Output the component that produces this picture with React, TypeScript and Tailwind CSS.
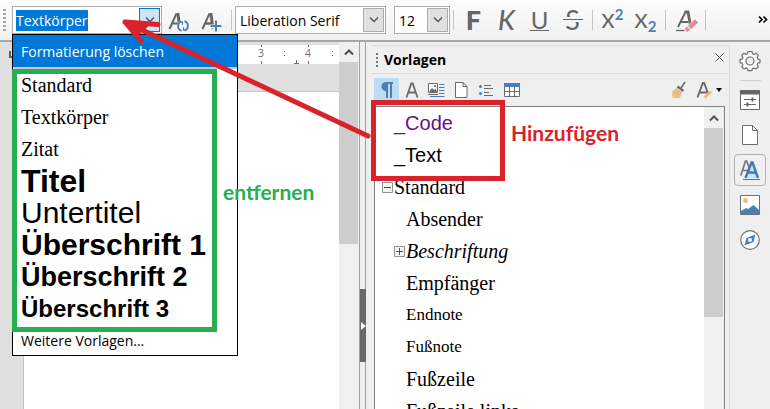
import { useEffect, useRef, type ReactNode } from "react";

type StyleItem = {
  name: string;
  className: string;
};

type TreeItem = StyleItem & {
  level: number;
  toggle?: "plus" | "minus";
};

const dropdownStyles: StyleItem[] = [
  { name: "Standard", className: "font-['Liberation_Serif',serif] text-[20px]" },
  { name: "Textkörper", className: "font-['Liberation_Serif',serif] text-[20px]" },
  { name: "Zitat", className: "font-['Liberation_Serif',serif] text-[20px]" },
  { name: "Titel", className: "font-bold text-[32px]" },
  { name: "Untertitel", className: "text-[30px]" },
  { name: "Überschrift 1", className: "font-bold text-[30px]" },
  { name: "Überschrift 2", className: "font-bold text-[27px]" },
  { name: "Überschrift 3", className: "font-bold text-[24px]" },
];

const treeStyles: TreeItem[] = [
  { name: "_Code", level: 0, className: "font-['Liberation_Sans',sans-serif] text-[20px] text-[#6d0f7d]" },
  { name: "_Text", level: 0, className: "font-['Liberation_Sans',sans-serif] text-[20px]" },
  { name: "Standard", level: 0, toggle: "minus", className: "text-[20px]" },
  { name: "Absender", level: 1, className: "text-[20px]" },
  { name: "Beschriftung", level: 1, toggle: "plus", className: "italic text-[20px]" },
  { name: "Empfänger", level: 1, className: "text-[20px]" },
  { name: "Endnote", level: 1, className: "text-[17px]" },
  { name: "Fußnote", level: 1, className: "text-[17px]" },
  { name: "Fußzeile", level: 1, className: "text-[20px]" },
  { name: "Fußzeile links", level: 1, className: "text-[20px]" },
];

function Chevron({ up = false }: { up?: boolean }) {
  return (
    <svg viewBox="0 0 12 8" width="12" height="8" fill="none" stroke="#505050">
      {up ? (
        <path d="M2 6.5 6 2.5l4 4" strokeWidth="2" />
      ) : (
        <path d="M2 1.5 6 5.5l4-4" strokeWidth="1.3" />
      )}
    </svg>
  );
}

function Separator() {
  return <div className="mx-[3px] h-5 w-px shrink-0 bg-[#c4c4c4]" />;
}

function ToolButton({ label, children }: { label: string; children: ReactNode }) {
  return (
    <button
      type="button"
      aria-label={label}
      className="flex h-8 w-[33px] shrink-0 items-center justify-center text-[#666]"
    >
      {children}
    </button>
  );
}

function ComboSelect({ label, value, className }: { label: string; value: string; className: string }) {
  return (
    <div className={`relative h-7 shrink-0 border border-[#ababab] bg-white ${className}`}>
      <select
        aria-label={label}
        className="h-full w-full appearance-none bg-transparent pl-1 text-[14px] text-black outline-none"
      >
        <option>{value}</option>
      </select>
      <span className="pointer-events-none absolute inset-y-px right-px flex w-[21px] items-center justify-center border border-[#adadad] bg-[#e1e1e1]">
        <Chevron />
      </span>
    </div>
  );
}

function LetterIcon({ children }: { children?: ReactNode }) {
  return (
    <svg width="24" height="24" viewBox="0 0 24 24" fill="none">
      <path d="M2.5 21 9.500 5.500" stroke="#666" strokeWidth="2" />
      <path d="M10.800 5 13 21" stroke="#666" strokeWidth="3" />
      <path d="M5.500 15.500H12" stroke="#666" strokeWidth="2" />
      {children}
    </svg>
  );
}

function FormatToolbar() {
  const inputRef = useRef<HTMLInputElement>(null);

  useEffect(() => {
    inputRef.current?.focus();
    inputRef.current?.select();
  }, []);

  return (
    <header className="flex h-[42px] shrink-0 items-center border-b-2 border-[#a6a6a6] bg-linear-to-b from-[#fcfcfc] to-[#f1f1f1]">
      <svg width="12" height="24" className="shrink-0" fill="#a8a8a8">
        {[0, 4, 8, 12, 16, 20].map((y) => (
          <rect key={y} x="3" y={y + 1} width="3" height="2" />
        ))}
      </svg>
      <div className="flex h-7 w-[150px] shrink-0 border border-[#ababab] bg-white">
        <input
          ref={inputRef}
          aria-label="Absatzvorlage"
          defaultValue="Textkörper"
          className="w-0 grow pl-[3px] text-[14px] text-black outline-none selection:bg-[#0078d7] selection:text-white"
        />
        <button
          type="button"
          aria-label="Vorlagenliste öffnen"
          className="m-px flex w-[21px] items-center justify-center border border-[#0078d7] bg-[#cce4f7]"
        >
          <Chevron />
        </button>
      </div>
      <ToolButton label="Vorlage aktualisieren">
        <LetterIcon>
          <circle cx="16" cy="18" r="6" fill="#f6f6f6" />
          <path d="M14.200 13.400a5 5 0 0 0 .3 9.400M17.800 22.600a5 5 0 0 0-.3-9.400" stroke="#4a80b8" strokeWidth="1.800" />
          <path d="M13 13.800h2.500v3M19 22.200h-2.500v-3" stroke="#4a80b8" strokeWidth="1.200" />
        </LetterIcon>
      </ToolButton>
      <ToolButton label="Neue Vorlage">
        <LetterIcon>
          <path d="M16 12v12M9.500 18.500H22" stroke="#f6f6f6" strokeWidth="4" />
          <path d="M5.500 15.500h5" stroke="#666" strokeWidth="2" />
          <path d="M16 12.500v11M10.500 18h11" stroke="#4a80b8" strokeWidth="2" />
        </LetterIcon>
      </ToolButton>
      <Separator />
      <ComboSelect label="Schriftname" value="Liberation Serif" className="w-[151px]" />
      <ComboSelect label="Schriftgröße" value="12" className="ml-2 w-14" />
      <Separator />
      <ToolButton label="Fett">
        <span className="font-['Lato',sans-serif] text-[27px] leading-8 font-black">F</span>
      </ToolButton>
      <ToolButton label="Kursiv">
        <span className="font-['Lato',sans-serif] text-[27px] leading-8 font-medium italic">K</span>
      </ToolButton>
      <ToolButton label="Unterstrichen">
        <span className="w-[19px] border-b border-[#666] text-center font-['Lato',sans-serif] text-[24px] leading-5">
          U
        </span>
      </ToolButton>
      <ToolButton label="Durchgestrichen">
        <span className="relative w-5 text-center font-['Lato',sans-serif] text-[27px] leading-8">
          S
          <span className="absolute inset-x-0 top-[13px] h-[5px] border-y-2 border-[#f6f6f6] bg-[#666]" />
        </span>
      </ToolButton>
      <Separator />
      <ToolButton label="Hochgestellt">
        <span className="flex font-['Lato',sans-serif] text-[20px] leading-7 font-medium">
          X<span className="text-[15px] leading-4 font-bold text-[#4a80b8]">2</span>
        </span>
      </ToolButton>
      <ToolButton label="Tiefgestellt">
        <span className="flex items-end font-['Lato',sans-serif] text-[20px] leading-7 font-medium">
          X<span className="text-[15px] leading-4 font-bold text-[#4a80b8]">2</span>
        </span>
      </ToolButton>
      <Separator />
      <ToolButton label="Direkte Formatierung löschen">
        <svg width="24" height="24" viewBox="0 0 24 24" fill="none">
          <path d="M4 19 11.500 4" stroke="#666" strokeWidth="2" />
          <path d="M10.500 4H14l2.500 14" stroke="#666" strokeWidth="2.800" />
          <path d="M6.500 14H14" stroke="#666" strokeWidth="2" />
          <path d="M2 22.500h10" stroke="#666" strokeWidth="1.300" />
          <path d="m11.500 23.500 12-11" stroke="#f6f6f6" strokeWidth="6" />
          <path d="m12 22.500 2.500-2.300M15.500 19.500 22.500 13" stroke="#e28a9a" strokeWidth="4.500" />
        </svg>
      </ToolButton>
      <Separator />
      <button type="button" aria-label="Weitere Optionen" className="mr-[2px] ml-auto">
        <svg width="10" height="10" fill="none" stroke="#000" strokeWidth="1.700">
          <path d="m1 1.500 3 3-3 3M5.500 1.500l3 3-3 3" />
        </svg>
      </button>
    </header>
  );
}

function StyleDropdown() {
  return (
    <div className="absolute top-[34px] left-3 w-[226px] border border-black bg-white">
      <button
        type="button"
        className="flex h-8 w-full items-center bg-[#0078d7] pl-2 text-[14px] text-white"
      >
        Formatierung löschen
      </button>
      <div className="h-[2px] bg-[#c8c8c8]" />
      <ul className="font-['Liberation_Sans',sans-serif]">
        {dropdownStyles.map((item) => (
          <li key={item.name} className={`flex h-8 items-center pl-2 leading-8 whitespace-nowrap ${item.className}`}>
            {item.name}
          </li>
        ))}
      </ul>
      <button type="button" className="flex h-[30px] w-full items-center pl-2 text-[14px]">
        Weitere Vorlagen...
      </button>
      {/* entries to be removed */}
      <div className="absolute top-[34px] -left-px h-[263px] w-[205px] border-5 border-[#28ae50]" />
    </div>
  );
}

function Document() {
  return (
    <main className="flex w-[360px] shrink-0 border-r border-[#a0a0a0]">
      <div className="flex grow flex-col bg-[#dfdfdf]">
        <div className="mt-[3px] flex h-[19px] shrink-0">
          <svg width="23" height="19" className="shrink-0" fill="none" stroke="#606060" strokeWidth="2">
            <path d="M10 6v6h6" />
          </svg>
          <svg width="316" height="19" className="bg-white" fill="#707070">
            <g fontFamily="Open Sans, sans-serif" fontSize="11" textAnchor="middle">
              <text x="238" y="12">3</text>
              <text x="285" y="12">4</text>
            </g>
            {[238, 285].map((x) => (
              <path key={x} d={`M${x} 0h1v2h-1zM${x} 16h1v3h-1z`} />
            ))}
            {[261, 309].map((x) => (
              <path key={x} d={`M${x} 6h1v1h-1zM${x} 10h1v1h-1z`} />
            ))}
            <path d="M271 18h5v1h-5zM273 15h1v3h-1z" />
          </svg>
        </div>
        <div className="mt-[27px] ml-[23px] grow border-t border-l border-[#c4c4c4] bg-white" />
      </div>
      <div className="flex w-5 shrink-0 flex-col bg-[#f0f0f0] pr-px">
        <div className="flex h-5 items-center justify-center">
          <Chevron up />
        </div>
        <div className="h-[182px] bg-[#cdcdcd]" />
      </div>
    </main>
  );
}

function Splitter() {
  return (
    <div className="flex w-[6px] shrink-0 items-start border-r border-[#a0a0a0] pt-[247px]">
      <button
        type="button"
        aria-label="Seitenleiste ausblenden"
        className="flex h-[73px] w-[6px] shrink-0 items-center bg-[#696969]"
      >
        <svg width="6" height="8" fill="#fff">
          <path d="M1 0v8l5-4z" />
        </svg>
      </button>
    </div>
  );
}

function PanelButton({ label, active = false, children }: { label: string; active?: boolean; children: ReactNode }) {
  return (
    <button
      type="button"
      aria-label={label}
      className={`flex h-6 w-[25px] items-center justify-center ${active ? "bg-[#bcdcf4]" : ""}`}
    >
      {children}
    </button>
  );
}

function PanelToolbar() {
  return (
    <div className="flex h-8 shrink-0 items-center pl-[3px]">
      <PanelButton label="Absatzvorlagen" active>
        <svg width="16" height="18" fill="#4a80b8">
          <path d="M7 1h7v2h-1v14h-2V3H9v14H7v-7a4.500 4.500 0 0 1 0-9z" />
        </svg>
      </PanelButton>
      <PanelButton label="Zeichenvorlagen">
        <svg width="14" height="16" fill="none" stroke="#6b6b6b" strokeWidth="1.800">
          <path d="M1.500 15.500 6.300 1.500h1.400l4.800 14M3.500 10.500h7" />
        </svg>
      </PanelButton>
      <PanelButton label="Rahmenvorlagen">
        <svg width="17" height="16" fill="none">
          <path d="M.5 1.500h9v9h-9z" fill="#fff" stroke="#6b6b6b" />
          <path d="m1.500 9 2.500-3 2 2 1.500-1.500 1.500 3.500h-7.500z" fill="#6b6b6b" />
          <circle cx="7" cy="4" r="1" fill="#6b6b6b" />
          <path d="M11 2.500h5.500M11 5.500h5.500M11 8.500h5.500M11 11.500h5.500M2 14.500h14.500" stroke="#4a80b8" />
          <path d="M0 12.500h10" stroke="#6b6b6b" />
        </svg>
      </PanelButton>
      <PanelButton label="Seitenvorlagen">
        <svg width="13" height="16" fill="#fff" stroke="#6b6b6b">
          <path d="M.5.500h7.500l4 4v11H.5zM8 .500v4h4" />
        </svg>
      </PanelButton>
      <PanelButton label="Listenvorlagen">
        <svg width="16" height="14" fill="none">
          <path d="M5 2.500h7M5 5.500h9M5 9.500h5M5 12.500h9" stroke="#6b6b6b" />
          <circle cx="1.500" cy="3.500" r="1.500" fill="#4a80b8" />
          <circle cx="1.500" cy="10.500" r="1.500" fill="#4a80b8" />
        </svg>
      </PanelButton>
      <PanelButton label="Tabellenvorlagen">
        <svg width="16" height="14" fill="#fff">
          <path d="M.5.500h15v13H.5z" stroke="#6b6b6b" />
          <path d="M0 0h16v4H0z" fill="#4a80b8" />
          <path d="M.5 8.500h15M5.500 4v9M10.500 4v9" stroke="#6b6b6b" />
        </svg>
      </PanelButton>
      <div className="mr-[7px] ml-auto flex items-center">
        <PanelButton label="Gießkannenmodus">
          <svg width="16" height="18" fill="none">
            <path d="M14 1 10 7" stroke="#6b6b6b" strokeWidth="1.500" />
            <path d="m6.500 5.500 6 4.500" stroke="#6b6b6b" strokeWidth="2.200" />
            <path d="M5.500 7 11 11.500 9 17H2l1.500-2L1 16l.5-6z" fill="#e8bf82" />
          </svg>
        </PanelButton>
        <PanelButton label="Vorlagenaktionen">
          <svg width="16" height="18" fill="none">
            <path d="M1.500 16.500 6.800 2h1.400l4 11M3.500 11.500H11" stroke="#6b6b6b" strokeWidth="1.900" />
            <path d="m8.500 16.500 6.500-6" stroke="#e8bf82" strokeWidth="3" />
          </svg>
        </PanelButton>
        <svg width="6" height="4">
          <path d="M0 0h6L3 4z" />
        </svg>
      </div>
    </div>
  );
}

function TreeToggle({ kind }: { kind?: "plus" | "minus" }) {
  if (!kind) return <span className="w-3" />;
  return (
    <button type="button" aria-label={kind === "plus" ? "Aufklappen" : "Zuklappen"} className="w-3">
      <svg width="11" height="11" fill="none">
        <path d="M.5.500h10v10H.5z" fill="#f4f4f4" stroke="#919191" />
        <path d={kind === "plus" ? "M2 5.500h7M5.500 2v7" : "M2 5.500h7"} stroke="#3b4f81" />
      </svg>
    </button>
  );
}

function StylesPanel() {
  return (
    <aside className="mt-[3px] ml-[5px] flex min-w-0 grow flex-col border-t border-[#dcdcdc]">
      <div className="flex h-7 shrink-0 items-center border-b border-[#dcdcdc] pr-[5px] pl-[4px]">
        <svg width="9" height="14" fill="#777" className="shrink-0">
          {[0, 4, 8, 12].map((y) => (
            <rect key={y} x="1" y={y} width="2" height="2" />
          ))}
        </svg>
        <h2 className="text-[14px] font-bold text-black">Vorlagen</h2>
        <button type="button" aria-label="Schließen" className="ml-auto pb-1">
          <svg width="9" height="9" stroke="#555">
            <path d="m.5.500 8 8M8.500.500l-8 8" />
          </svg>
        </button>
      </div>
      <PanelToolbar />
      <div className="mr-1 ml-[3px] flex min-h-0 grow border border-b-0 border-[#808080] bg-white">
        <ul className="min-w-0 grow overflow-hidden font-['Liberation_Serif',serif] text-black">
          {treeStyles.map((item) => (
            <li
              key={item.name}
              className={`flex h-8 items-center leading-8 ${item.level === 0 ? "pl-[7px]" : "pl-[19px]"} ${item.className}`}
            >
              <TreeToggle kind={item.toggle} />
              {item.name}
            </li>
          ))}
        </ul>
        <div className="w-5 shrink-0 bg-[#f0f0f0] pr-px">
          <div className="flex h-[21px] items-center justify-center">
            <Chevron up />
          </div>
          <div className="h-[189px] bg-[#cdcdcd]" />
        </div>
      </div>
    </aside>
  );
}

function TabButton({ label, active = false, children }: { label: string; active?: boolean; children: ReactNode }) {
  return (
    <button
      type="button"
      aria-label={label}
      className={`mb-[3px] flex h-8 w-8 shrink-0 items-center justify-center ${
        active ? "rounded-sm border border-[#b0b0b0]" : ""
      }`}
    >
      {children}
    </button>
  );
}

function TabBar() {
  return (
    <nav className="mt-1 flex w-[41px] shrink-0 flex-col items-center border-l border-[#dcdcdc]">
      <button type="button" aria-label="Einstellungen" className="flex h-[30px] items-center">
        <svg width="22" height="22" fill="none" stroke="#707070" strokeWidth="1.200">
          <path d="M9 1.500h4l.5 2.200 1.600.7 1.900-1.200 2.300 2.300-1.100 1.900.7 1.700 2.100.5v3l-2.100.6-.7 1.600 1.100 2-2.300 2.200-1.900-1.100-1.600.7-.5 2.100H9l-.5-2.100-1.700-.7L5 19l-2.300-2.200 1.200-2-.7-1.600-2.200-.6v-3l2.200-.5.700-1.700-1.200-1.900L5 3.200l1.800 1.200 1.700-.7z" fill="#fafafa" strokeLinejoin="round" />
          <circle cx="11" cy="11" r="4" fill="#efefef" />
        </svg>
      </button>
      <div className="mt-1 mb-[3px] h-px w-[21px] bg-[#d0d0d0]" />
      <TabButton label="Eigenschaften">
        <svg width="20" height="20" fill="none" stroke="#666">
          <path d="M.5.500h19v19H.5z" fill="#fff" />
          <path d="M0 2.500h20" strokeWidth="4" />
          <path d="M4 9.500h12M4 14.500h12" />
          <path d="M12.500 7.500v4M7.500 12.500v4" strokeWidth="2" />
        </svg>
      </TabButton>
      <TabButton label="Seite">
        <svg width="16" height="20" fill="#fff" stroke="#707070">
          <path d="M.5.500h10l5 5v14H.5zM10.500.500v5h5" />
        </svg>
      </TabButton>
      <TabButton label="Vorlagen" active>
        <svg width="20" height="20" fill="none">
          <path d="M.8 15.500 5.500 1h1.200l3.300 9M2.500 10.500h6" stroke="#777" strokeWidth="1.700" />
          <path d="m5.500 18 6-15h1.500l5 15z" fill="#cfe3f5" />
          <path d="m5.500 18 6-15.500h1L18 18M7.500 12.500h9" stroke="#3f7ab5" strokeWidth="2.400" />
          <path d="M3 19.500h17" stroke="#3f7ab5" />
        </svg>
      </TabButton>
      <TabButton label="Galerie">
        <svg width="20" height="20" fill="none">
          <path d="M.5.500h19v19H.5z" fill="#fff" stroke="#707070" />
          <circle cx="5.500" cy="5.500" r="2.500" fill="#e8bf82" />
          <path d="M1 19v-3l5-3 2 1 5.500-4L19 15v4z" fill="#4a80b8" />
        </svg>
      </TabButton>
      <TabButton label="Navigator">
        <svg width="20" height="20" fill="none">
          <circle cx="10" cy="10" r="9.300" fill="#fff" stroke="#707070" strokeWidth="1.200" />
          <path d="M15.500 4.500 13.500 12 4.500 15.500 6.500 8z" fill="#4a80b8" />
          <circle cx="10" cy="10" r="2" fill="#fff" />
        </svg>
      </TabButton>
    </nav>
  );
}

function Annotations() {
  return (
    <div className="pointer-events-none font-['Lato',sans-serif] text-[21px] leading-6 font-bold">
      <p className="absolute top-[180px] left-[223px] text-[#28ae50]">entfernen</p>
      <p className="absolute top-[121px] left-[511px] text-[#da222a]">Hinzufügen</p>
      <div className="absolute top-[100px] left-[371px] h-[81px] w-[134px] border-5 border-[#da222a]" />
      <svg
        className="absolute top-0 left-0"
        width="380"
        height="150"
        fill="none"
        stroke="#da222a"
        strokeWidth="5"
        strokeLinecap="round"
        strokeLinejoin="round"
      >
        <path d="M368 136 125 22M158 24.500 125 22l16 19" />
        <path d="m125 22 24 3-11 10z" fill="#da222a" strokeWidth="1" />
      </svg>
    </div>
  );
}

function App() {
  return (
    <div className="relative flex h-screen flex-col overflow-hidden bg-[#efefef] font-['Open_Sans',sans-serif]">
      <FormatToolbar />
      <div className="flex min-h-0 grow">
        <Document />
        <Splitter />
        <StylesPanel />
        <TabBar />
      </div>
      <StyleDropdown />
      <Annotations />
    </div>
  );
}

export default App;
